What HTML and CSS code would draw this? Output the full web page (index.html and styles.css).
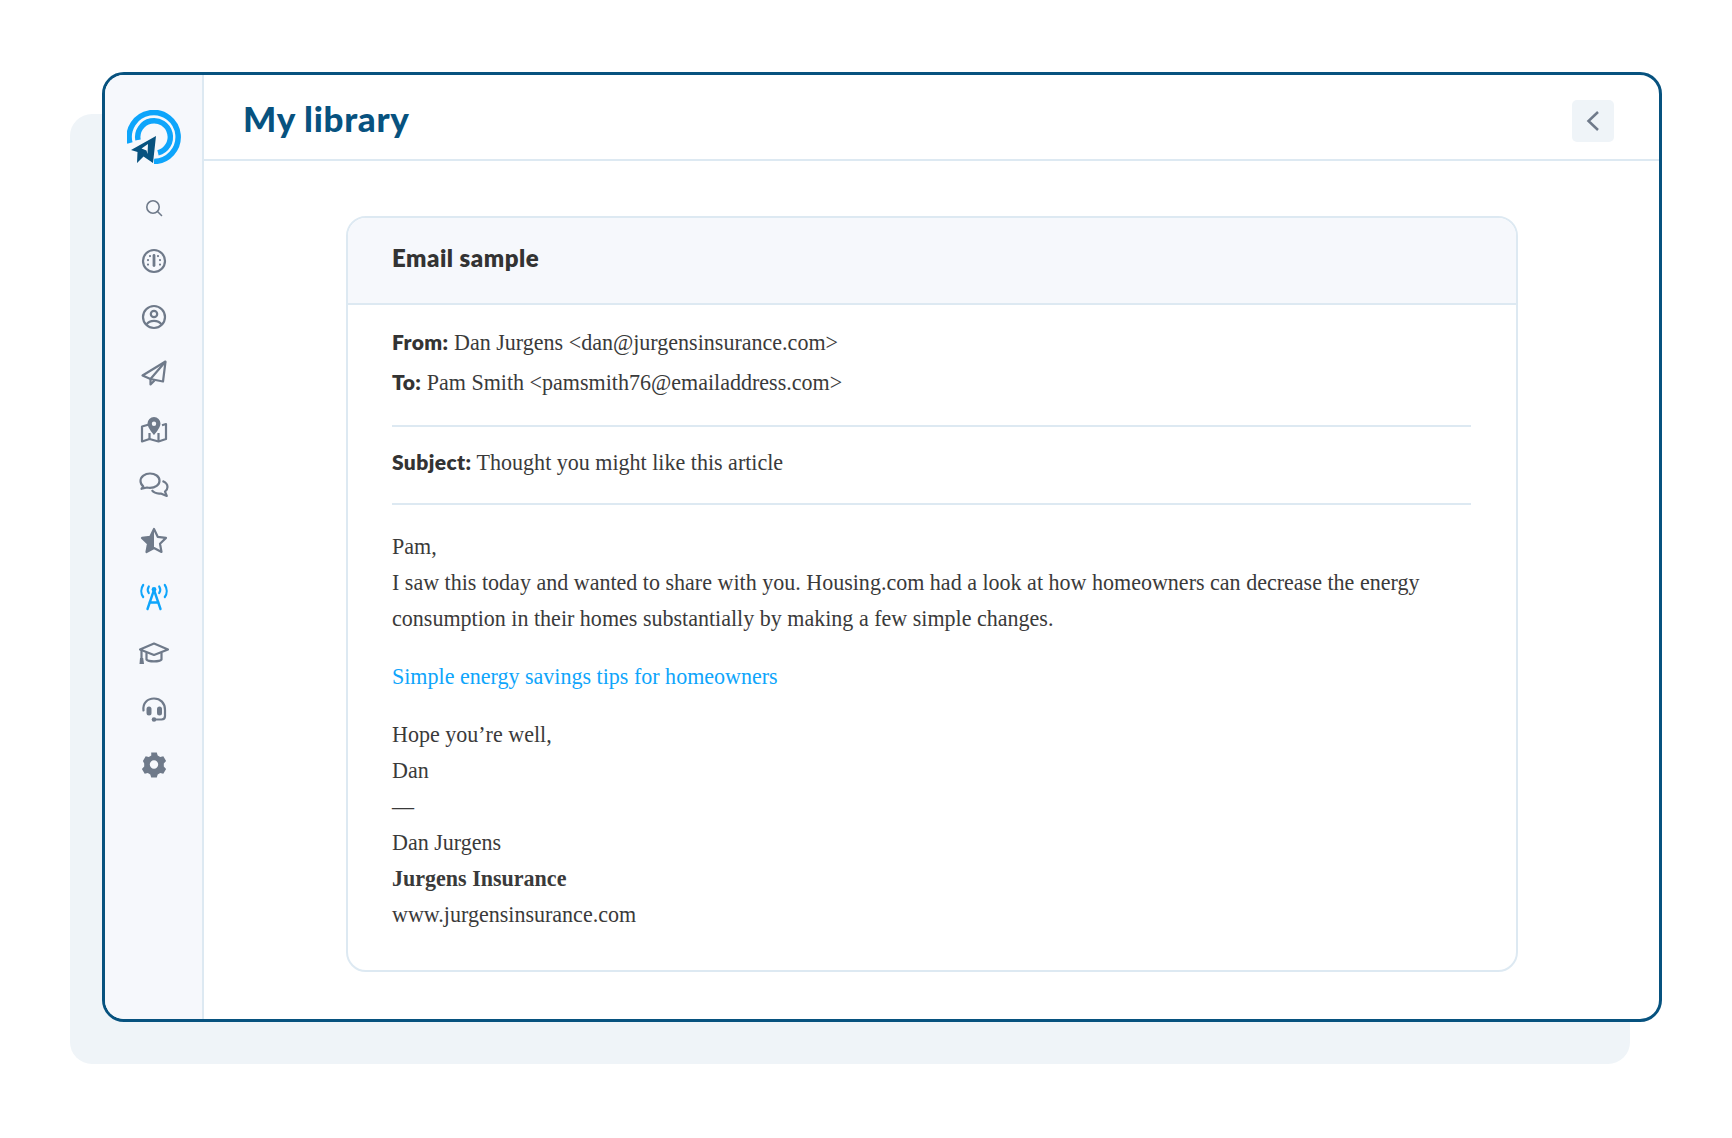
FILE: index.html
```html
<!DOCTYPE html>
<html lang="en">
<head>
    <meta charset="UTF-8">
    <meta name="viewport" content="width=device-width, initial-scale=1.0">
    <title>My library</title>
    <link rel="stylesheet" href="styles.css">
</head>
<body>
    <div class="frame">
        <aside class="sidebar">
            <svg class="logo" viewBox="0 0 54 54" fill="none">
                <path d="M2.900 33A24.500 24.500 0 1 1 27 51.500" stroke="#0ea5fb" stroke-width="5.500"/>
                <path d="M11 30A16.300 16.300 0 1 1 31 42.800" stroke="#0ea5fb" stroke-width="5.500"/>
                <path d="M29 26L4 40l6.500 2-.5 11 6.500-6.500 9.500 6.500zM21 34L14.500 38.500 19.500 40.500 20.500 44z" fill="#07527f" fill-rule="evenodd" stroke="#f6f8fc" stroke-width="1.500" paint-order="stroke"/>
            </svg>

            <nav class="nav">
                <a class="nav-item nav-search">
                    <svg viewBox="0 0 30 30" class="icon" fill="none">
                        <circle cx="14" cy="14" r="6.200"/><path d="M18.500 18.500L22.500 22.500" stroke-linecap="round"/>
                    </svg>
                </a>
                <a class="nav-item">
                    <svg viewBox="0 0 30 30" class="icon" fill="none">
                        <circle cx="15" cy="15" r="11"/>
                        <path d="M15 9.500v10" stroke-width="2.800" stroke-linecap="round"/>
                        <path d="M9 14v.1M11 10v.1M19 10v.1M21 14v.1M9 18.500v.1M21 18.500v.1" stroke-width="2.200" stroke-linecap="round"/>
                    </svg>
                </a>
                <a class="nav-item">
                    <svg viewBox="0 0 30 30" class="icon" fill="none">
                        <circle cx="15" cy="15" r="11"/>
                        <circle cx="15" cy="12" r="3.200"/>
                        <path d="M7.500 22.500C9.500 19.500 12 18.800 15 18.800s5.500.7 7.500 3.700"/>
                    </svg>
                </a>
                <a class="nav-item">
                    <svg viewBox="0 0 30 30" class="icon" fill="none" stroke-linejoin="round">
                        <path d="M26.500 3.500L3.500 17.500l8 3.500 12.500 2.500z"/>
                        <path d="M26.500 3.500L11.500 21v5.500l4-4"/>
                    </svg>
                </a>
                <a class="nav-item">
                    <svg viewBox="0 0 30 30" class="icon" fill="none" stroke-linejoin="round">
                        <path d="M10 10.500L3 12.500v15l7.500-2.500 9 2.500 7.500-2.500v-15l-4 1.200"/>
                        <path d="M10.500 19v6M19.500 19v8"/>
                        <path class="solid" stroke="none" d="M15 3a6.500 6.500 0 0 0-6.500 6.500C8.500 14 15 21 15 21s6.500-7 6.500-11.500A6.500 6.500 0 0 0 15 3zm0 4.500a2.200 2.200 0 1 1 0 4.400 2.200 2.200 0 0 1 0-4.400z" fill-rule="evenodd"/>
                    </svg>
                </a>
                <a class="nav-item">
                    <svg viewBox="0 0 30 30" class="icon" fill="none" stroke-linejoin="round">
                        <path d="M11 3.500C6 3.500 1.500 6.500 1.500 11c0 2.300 1 4 2.800 5.300L2.500 18.800l5.500-1.300c1 .3 2 .4 3 .4 5.200 0 9.500-2.900 9.500-7.200s-4.300-7.200-9.500-7.200z"/>
                        <path d="M23.500 11c3 1.200 5 3.300 5 6 0 2-1 3.500-2.500 4.700l1.800 4.300-6-2.500c-3.500.4-7-.7-9-3.300"/>
                    </svg>
                </a>
                <a class="nav-item">
                    <svg viewBox="0 0 30 30" class="icon" fill="none" stroke-linejoin="round">
                        <path d="M15 3l3.700 7.800 8.300 1.100-6 5.800 1.500 8.300L15 22l-7.500 4 1.500-8.300-6-5.800 8.300-1.100z"/>
                        <path class="solid" stroke="none" d="M15 3v19l-7.500 4 1.500-8.300-6-5.800 8.300-1.100z"/>
                    </svg>
                </a>
                <a class="nav-item nav-active">
                    <svg viewBox="0 0 30 30" class="icon" fill="none" stroke-linecap="round">
                        <circle class="solid" stroke="none" cx="15" cy="7.500" r="2.400"/>
                        <path d="M15 8L8.500 27M15 8l6.500 19M10.500 20.500h9" stroke-width="2.400"/>
                        <path d="M9.800 4.500c-1.300 2-1.300 4.500 0 6.500M20.200 4.500c1.300 2 1.300 4.500 0 6.500M4.200 3c-2.500 3.500-2.500 8.500 0 12M25.800 3c2.500 3.500 2.500 8.500 0 12" stroke-width="2.200"/>
                    </svg>
                </a>
                <a class="nav-item">
                    <svg viewBox="0 -1 30 30" class="icon" fill="none" stroke-linejoin="round">
                        <path d="M15 4.500L1 10.500l14 5.500 14-5.500z"/>
                        <path d="M7.500 13.500v7c2 2.500 13 2.500 15 0v-7"/>
                        <path d="M2.500 11v8"/>
                        <path class="solid" stroke="none" d="M1 19h3.200l.8 6H.5z"/>
                    </svg>
                </a>
                <a class="nav-item">
                    <svg viewBox="0 -1 30 30" class="icon" fill="none" stroke-linecap="round">
                        <path d="M4.500 15.500C3.500 8 8.500 3.500 15 3.500S26 8 26 15v6c0 2-1.200 3.500-3.500 3.500H17"/>
                        <rect class="solid" stroke="none" x="7.500" y="11.500" width="5" height="9" rx="2.500"/>
                        <rect class="solid" stroke="none" x="18" y="11.500" width="5" height="9" rx="2.500"/>
                        <circle class="solid" stroke="none" cx="15" cy="24.500" r="2.300"/>
                    </svg>
                </a>
                <a class="nav-item">
                    <svg viewBox="0 1 30 30" class="icon">
                        <path class="solid" stroke="none" fill-rule="evenodd" d="M12.200 3.500h5.600l.9 3.100 2.500 1.400 3.100-.8 2.800 4.900-2.300 2.300v3.200l2.300 2.300-2.800 4.900-3.100-.8-2.500 1.400-.9 3.100h-5.600l-.9-3.100-2.500-1.400-3.100.8-2.800-4.900 2.300-2.300V14.400L3.900 12.100l2.800-4.900 3.100.8 2.500-1.400zM15 11.300a4.200 4.200 0 1 0 0 8.400 4.200 4.200 0 0 0 0-8.400z"/>
                    </svg>
                </a>
            </nav>
        </aside>

        <main class="main">
            <header class="header">
                <h1>My library</h1>
                <button class="back-button">
                    <svg viewBox="0 0 20 24" width="20" height="24" fill="none" stroke="#6f7a8a" stroke-width="2.500">
                        <path d="M15 3L5.500 12 15 21"/>
                    </svg>
                </button>
            </header>

            <section class="card">
                <h2 class="card-title">Email sample</h2>
                <div class="card-body">
                    <div class="meta meta-addresses">
                        <p><b>From:</b> Dan Jurgens &lt;dan@jurgensinsurance.com&gt;</p>
                        <p><b>To:</b> Pam Smith &lt;pamsmith76@emailaddress.com&gt;</p>
                    </div>
                    <div class="meta meta-subject">
                        <p><b>Subject:</b> Thought you might like this article</p>
                    </div>
                    <div class="message">
                        <p>Pam,<br>I saw this today and wanted to share with you. Housing.com had a look at how homeowners can decrease the energy consumption in their homes substantially by making a few simple changes.</p>
                        <p><a class="link">Simple energy savings tips for homeowners</a></p>
                        <p>Hope you’re well,<br>Dan<br>—<br>Dan Jurgens<br><strong>Jurgens Insurance</strong><br>www.jurgensinsurance.com</p>
                    </div>
                </div>
            </section>
        </main>
    </div>
</body>
</html>
```

FILE: styles.css
```css
body {
    margin: 0;
    padding: 72px 0 74px 102px;
    background: #fff;
    font-family: "Liberation Serif", serif;
    color: #3a3a3a;
}
.frame {
    box-sizing: border-box;
    width: 1560px;
    height: 950px;
    display: flex;
    background: #fff;
    border: 3px solid #07527f;
    border-radius: 22px;
    box-shadow: -32px 42px 0 #eff4f8; /* pale panel behind the window */
}
.sidebar {
    box-sizing: border-box;
    width: 99px;
    flex: none;
    padding-top: 35px;
    background: #f6f8fc;
    border-right: 2px solid #dde9f2;
    border-radius: 19px 0 0 19px;
    display: flex;
    flex-direction: column;
    align-items: center;
}
.logo {
    width: 54px;
    height: 54px;
    margin-bottom: 19px;
}
.nav {
    display: flex;
    flex-direction: column;
    align-items: center;
}
.nav-item {
    height: 56px;
    display: flex;
    align-items: center;
    justify-content: center;
}
.nav-search {
    height: 50px;
}
.icon {
    width: 30px;
    height: 30px;
    stroke: #6f7a8a;
    stroke-width: 2.2px;
    color: #6f7a8a;
}
.nav-search .icon {
    stroke-width: 1.6px;
}
.solid {
    fill: currentColor;
}
.nav-active .icon {
    stroke: #0ea5fb;
    color: #0ea5fb;
}
.main {
    flex: 1;
}
.header {
    box-sizing: border-box;
    height: 86px;
    padding: 24px 45px 0 39px;
    border-bottom: 2px solid #dde9f2;
    display: flex;
    justify-content: space-between;
    align-items: flex-start;
}
.header h1 {
    margin: 0;
    font-family: Lato, sans-serif;
    font-weight: 900;
    font-size: 35px;
    line-height: 38px;
    letter-spacing: 0.7px;
    color: #07527f;
}
.back-button {
    width: 42px;
    height: 42px;
    margin-top: 1px;
    padding: 0;
    border: none;
    border-radius: 5px;
    background: #eff4f8;
    display: flex;
    align-items: center;
    justify-content: center;
}
.card {
    box-sizing: border-box;
    width: 1172px;
    height: 756px;
    margin: 55px 0 0 142px;
    border: 2px solid #dde9f2;
    border-radius: 20px;
    overflow: hidden;
}
.card-title {
    box-sizing: border-box;
    height: 87px;
    margin: 0;
    padding: 0 44px;
    background: #f6f8fc;
    border-bottom: 2px solid #dde9f2;
    font-family: Lato, sans-serif;
    font-weight: 800;
    font-size: 24px;
    line-height: 80px;
    letter-spacing: 0.5px;
    color: #333;
}
.card-body {
    padding: 18px 44px 0;
    font-size: 22.04px;
    line-height: 36px;
}
.card-body p {
    margin: 0;
}
.meta {
    width: 1079px;
    border-bottom: 2px solid #dde9f2;
}
.meta p {
    line-height: 40px;
}
.meta b {
    font-family: Lato, sans-serif;
    font-weight: 800;
    font-size: 21px;
    line-height: 1;
    letter-spacing: 0.4px;
    color: #333;
}
.meta-addresses {
    padding-bottom: 22px;
}
.meta-subject {
    padding: 16px 0 20px;
}
.message {
    padding-top: 24px;
}
.message p {
    margin-bottom: 22px;
}
.link {
    color: #0ea5fb;
}
```
